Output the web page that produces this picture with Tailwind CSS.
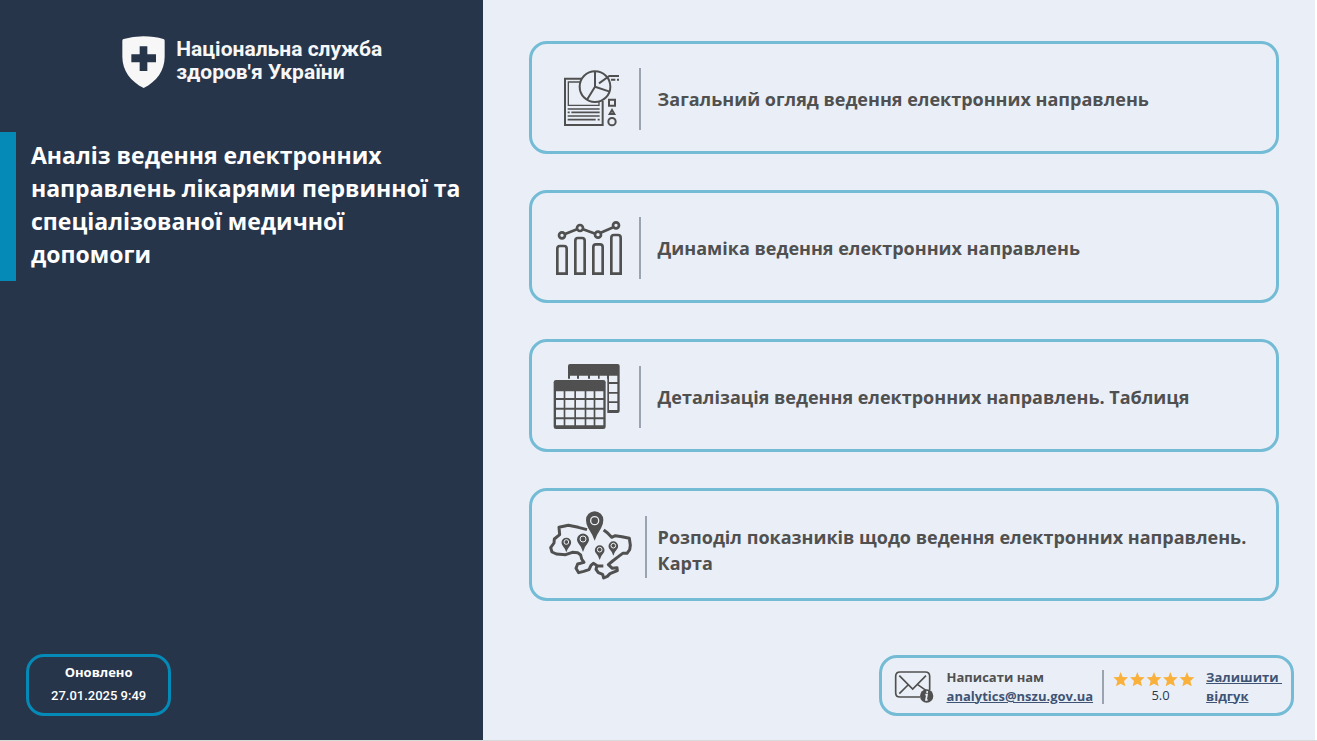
<!DOCTYPE html>
<html lang="uk">
<head>
<meta charset="utf-8">
<title>Аналіз ведення електронних направлень</title>
<script src="https://cdn.jsdelivr.net/npm/@tailwindcss/browser@4"></script>
</head>
<body class="bg-white font-['Open_Sans','Noto_Sans',sans-serif]">
<div class="flex min-h-screen border-b border-[#d9d9d9] pr-0.5">

  <aside class="flex w-[36.7%] shrink-0 flex-col bg-[#27354b] pb-6 text-white">
    <div class="flex items-start justify-center gap-[11px] pt-9 pl-[22px] text-[#f7f7f7]">
      <svg class="h-[52px] w-[43px]" viewBox="38 32 129 156" aria-hidden="true">
        <path fill="#f7f7f7" d="M39 46Q39 42 43 41Q70 33 102 33Q136 33 162 41Q166 42 166 46V94C166 136 142 168 103 188C64 168 39 136 39 94Z"/>
        <path fill="#27354b" d="M91 63h23v24h26v24h-26v26h-23v-26H66V87h25z"/>
      </svg>
      <p class="pt-[2px] font-['Roboto',sans-serif] text-[21px] leading-[23px] font-bold">Національна служба<br>здоров'я України</p>
    </div>
    <div class="mt-11 border-l-[16px] border-[#0589b7] pt-[7px] pb-[10px] pl-[15px]">
      <h1 class="text-[23px] leading-[33px] font-bold">Аналіз ведення електронних направлень лікарями первинної та спеціалізованої медичної<br>допомоги</h1>
    </div>
    <div class="mt-auto ml-[26px] self-start rounded-[18px] border-3 border-[#0589b7] px-[22px] pt-1 pb-1.5 text-center">
      <p class="text-[13px] leading-[23px] font-bold">Оновлено</p>
      <p class="font-['Roboto',sans-serif] text-[13px] leading-[23px] font-medium">27.01.2025 9:49</p>
    </div>
  </aside>

  <main class="flex grow flex-col bg-[#eaeff7] pt-[41px] pb-6 text-[#505050]">
    <nav class="mr-9 ml-[46px] flex flex-col gap-9">
      <a href="#overview" class="flex min-h-[113px] items-center rounded-[18px] border-3 border-[#74bbd5] pt-[3px] pl-[13px]">
        <svg class="h-[70px] w-[90px] shrink-0 overflow-visible" viewBox="60 87 270 210" fill="none" stroke="#505050" stroke-width="6" aria-hidden="true">
          <path d="M168 131H120V270H233V198"/>
          <path d="M166 141H130V211H222V199" stroke-width="4"/>
          <path d="M128 222h96M128 232h6M139 232h85M128 243h96M128 254h84M218 254h6" stroke-width="5"/>
          <circle cx="210" cy="155" r="46"/>
          <path d="M210 109V155L254 170M210 155L186 194M222 145L253 123H282M258 134H271M276 134h6"/>
          <path d="M252 194h18v18h-18zM261 225l7 12h-14z"/>
          <circle cx="261" cy="260" r="11"/>
        </svg>
        <span class="ml-1 h-[62px] w-0.5 shrink-0 bg-[#9ba3b1]"></span>
        <span class="ml-[17px] text-[18px] leading-[26px] font-bold">Загальний огляд ведення електронних направлень</span>
      </a>
      <a href="#dynamics" class="flex min-h-[113px] items-center rounded-[18px] border-3 border-[#74bbd5] pt-[3px] pl-[13px]">
        <svg class="h-[70px] w-[90px] shrink-0 overflow-visible" viewBox="60 84 270 210" fill="none" stroke="#505050" stroke-width="8" aria-hidden="true">
          <path d="M97 266V191Q97 183 105 183H117Q125 183 125 191V266zM151 266V167Q151 159 159 159H171Q179 159 179 167V266zM205 266V186Q205 178 213 178H225Q233 178 233 186V266zM259 266V158Q259 150 267 150H279Q287 150 287 158V266z"/>
          <circle cx="111" cy="151" r="9"/><circle cx="165" cy="129" r="9"/><circle cx="219" cy="149" r="9"/><circle cx="273" cy="121" r="9"/>
          <path d="M120 147L156 133M174 133L211 146M227 143L265 127"/>
        </svg>
        <span class="ml-1 h-[62px] w-0.5 shrink-0 bg-[#9ba3b1]"></span>
        <span class="ml-[17px] text-[18px] leading-[26px] font-bold">Динаміка ведення електронних направлень</span>
      </a>
      <a href="#table" class="flex min-h-[113px] items-center rounded-[18px] border-3 border-[#74bbd5] pt-[3px] pl-[13px]">
        <svg class="h-[70px] w-[90px] shrink-0 overflow-visible" viewBox="60 84 270 210" aria-hidden="true">
          <path fill="#505050" d="M129 134V96Q129 90 135 90H278Q284 90 284 96V231Q284 237 278 237H247V134z"/>
          <path fill="#eaeff7" d="M135 125h21v10h-21zM162 125h27v10h-27zM195 125h24v10h-24zM224 125h22v10h-22zM252 125h25v19h-25zM252 150h25v24h-25zM252 179h25v23h-25zM252 207h25v21h-25z"/>
          <rect fill="#505050" x="86" y="138" width="156" height="147" rx="7"/>
          <path fill="#eaeff7" d="M93 172h23v20h-23zM121 172h27v20h-27zM153 172h26v20h-26zM184 172h22v20h-22zM211 172h24v20h-24zM93 198h23v23h-23zM121 198h27v23h-27zM153 198h26v23h-26zM184 198h22v23h-22zM211 198h24v23h-24zM93 227h23v23h-23zM121 227h27v23h-27zM153 227h26v23h-26zM184 227h22v23h-22zM211 227h24v23h-24zM93 256h23v18h-23zM121 256h27v18h-27zM153 256h26v18h-26zM184 256h22v18h-22zM211 256h24v18h-24z"/>
        </svg>
        <span class="ml-1 h-[62px] w-0.5 shrink-0 bg-[#9ba3b1]"></span>
        <span class="ml-[17px] text-[18px] leading-[26px] font-bold">Деталізація ведення електронних направлень. Таблиця</span>
      </a>
      <a href="#map" class="flex min-h-[113px] items-center rounded-[18px] border-3 border-[#74bbd5] pt-[5px] pl-[13px]">
        <svg class="h-[70px] w-[90px] shrink-0 overflow-visible" viewBox="60 81 270 210" aria-hidden="true">
          <path fill="none" stroke="#505050" stroke-width="9" stroke-linejoin="round" d="M186 134L160 127L130 121L102 127L104 149L88 162L87 174L77 188L81 201L94 207L122 209L142 202L158 203L167 210L170 222L177 232L158 237L153 250L161 263L176 259L192 254L198 241L205 235L218 243L235 243M216 241L213 253L220 263L233 268L236 279L247 274L255 266L277 257L276 248L262 250L250 239L263 228L277 217L293 205L306 205L314 194L316 181L313 160L291 155L271 152L260 157L247 143L236 135"/>
          <g fill="#505050">
            <path d="M209 167Q203 150 190 130Q183 119 183 105A26 26 0 0 1 235 105Q235 119 228 130Q215 150 209 167z"/>
            <path d="M124 202Q120 190 113 182A14.500 14.500 0 1 1 135 182Q128 190 124 202z"/>
            <path d="M174 201Q170 186 160 175A18 18 0 1 1 188 175Q178 186 174 201z"/>
            <path d="M224 225Q220 212 213 205A14.500 14.500 0 1 1 235 205Q228 212 224 225z"/>
            <path d="M265 212Q261 200 254 193A14.500 14.500 0 1 1 276 193Q269 200 265 212z"/>
          </g>
          <g fill="#505050" stroke="#eaeff7" stroke-width="3">
            <circle cx="209" cy="107" r="12" stroke-width="4"/><circle cx="124" cy="171" r="7"/><circle cx="174" cy="162" r="9"/><circle cx="224" cy="194" r="7"/><circle cx="265" cy="182" r="7"/>
          </g>
        </svg>
        <span class="ml-[10px] h-[62px] w-0.5 shrink-0 bg-[#9ba3b1]"></span>
        <span class="ml-[11px] pt-1.5 text-[18px] leading-[26px] font-bold">Розподіл показників щодо ведення електронних направлень.<br>Карта</span>
      </a>
    </nav>

    <footer class="mt-auto mr-[21px] flex min-h-[61px] items-center self-end rounded-[18px] border-3 border-[#74bbd5] pt-0.5 pr-[9px] pl-3">
      <svg class="h-[34px] w-10 shrink-0" viewBox="75 77 120 102" fill="none" stroke="#505050" stroke-width="5" aria-hidden="true">
        <path d="M153 158H93Q80 158 80 145V96Q80 83 93 83H169Q182 83 182 96V138M91 94L131 134L171 94M91 148L117 122M171 138L145 120"/>
        <circle cx="173" cy="155" r="20" fill="#505050" stroke="none"/>
        <path stroke="#eaeff7" stroke-width="5" d="M175 140l-1 6M169 151h5l-3 16h5"/>
      </svg>
      <div class="ml-[13px] text-[13px] leading-[19px] font-bold">
        <p>Написати нам</p>
        <a href="mailto:analytics@nszu.gov.ua" class="text-[#3f5475] underline">analytics@nszu.gov.ua</a>
      </div>
      <span class="ml-[9px] h-[34px] w-0.5 shrink-0 bg-[#9ba3b1]"></span>
      <div class="ml-[9px] pt-0.5 text-center text-[#2b3a52]">
        <svg class="h-[15px] w-[83px]" viewBox="70 80 249 45" fill="#f9b13c" role="img" aria-label="5 зірок">
          <path id="star" d="M93 80L99 95L115 96L103 107L107 123L93 115L79 123L83 107L71 96L87 95z"/>
          <use href="#star" x="50"/><use href="#star" x="100"/><use href="#star" x="149"/><use href="#star" x="199"/>
        </svg>
        <p class="pl-3 text-[13px] leading-4">5.0</p>
      </div>
      <a href="#feedback" class="ml-[10px] text-[13px] leading-[19px] font-bold whitespace-pre text-[#3f5475] underline">Залишити 
відгук</a>
    </footer>
  </main>
</div>
</body>
</html>
